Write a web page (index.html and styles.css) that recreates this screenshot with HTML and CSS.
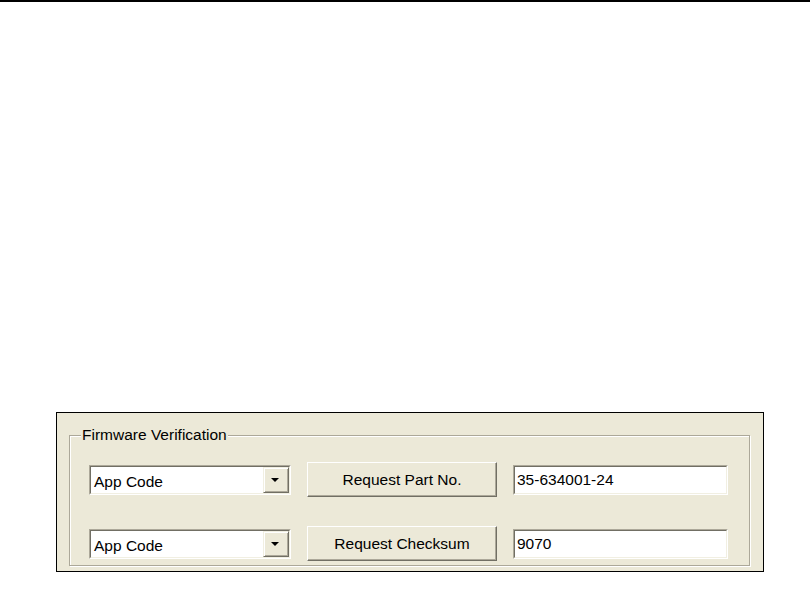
FILE: index.html
```html
<!DOCTYPE html>
<html>
<head>
<meta charset="utf-8">
<link rel="stylesheet" href="styles.css">
</head>
<body>
<div class="topline"></div>
<div class="panel">
  <fieldset class="group">
    <legend class="group-title">Firmware Verification</legend>
    <div class="row">
      <div class="combo">
        <div class="combo-inner">
          <span class="combo-text">App Code</span>
          <span class="combo-btn"><span class="arrow"></span></span>
        </div>
      </div>
      <button class="btn">Request Part No.</button>
      <div class="edit"><div class="edit-inner">35-634001-24</div></div>
    </div>
    <div class="row">
      <div class="combo">
        <div class="combo-inner">
          <span class="combo-text">App Code</span>
          <span class="combo-btn"><span class="arrow"></span></span>
        </div>
      </div>
      <button class="btn">Request Checksum</button>
      <div class="edit"><div class="edit-inner">9070</div></div>
    </div>
  </fieldset>
</div>
</body>
</html>
```

FILE: styles.css
```css
html, body {
  margin: 0;
  padding: 0;
  background: #ffffff;
}
body {
  font-family: "Liberation Sans", Arial, sans-serif;
  font-size: 15.5px;
  color: #000;
}
.topline {
  height: 2px;
  background: #000;
}
.panel {
  margin: 410px 0 0 56px;
  width: 708px;
  box-sizing: border-box;
  background: #ECE9D8;
  border: 1px solid #000;
  padding: 13px 13px 5px 12px;
}
.group {
  margin: 0;
  padding: 18px 0 4px 0;
  border: 1px solid #ACA899;
  box-shadow: inset 1px 1px 0 #fff, 1px 1px 0 #fff;
  display: flex;
  flex-direction: column;
  gap: 29px;
}
.group-title {
  margin-left: 11px;
  padding: 0 1px;
  line-height: 18px;
  background: #ECE9D8;
}
.row {
  display: flex;
  align-items: center;
  padding-left: 19px;
}
.combo {
  width: 202px;
  height: 30px;
  box-sizing: border-box;
  border-top: 1px solid #ACA899;
  border-left: 1px solid #ACA899;
  border-right: 1px solid #fff;
  border-bottom: 1px solid #fff;
}
.combo-inner {
  height: 100%;
  box-sizing: border-box;
  border-top: 1px solid #716F64;
  border-left: 1px solid #716F64;
  border-right: 1px solid #F1EFE2;
  border-bottom: 1px solid #F1EFE2;
  background: #fff;
  display: flex;
  align-items: center;
}
.combo-text {
  flex: 1;
  padding: 5px 0 0 3px;
  line-height: 18px;
}
.combo-btn {
  width: 26px;
  height: 26px;
  box-sizing: border-box;
  background: #ECE9D8;
  border-top: 1px solid #F1EFE2;
  border-left: 1px solid #F1EFE2;
  border-right: 1px solid #716F64;
  border-bottom: 1px solid #716F64;
  box-shadow: inset 1px 1px 0 #fff, inset -1px -1px 0 #ACA899;
  display: flex;
  align-items: center;
  justify-content: center;
}
.arrow {
  width: 0;
  height: 0;
  border-left: 4px solid transparent;
  border-right: 4px solid transparent;
  border-top: 4px solid #000;
  margin-left: -2px;
  margin-top: 1px;
}
.btn {
  margin-left: 16px;
  width: 190px;
  height: 35px;
  box-sizing: border-box;
  font-family: inherit;
  font-size: 15.5px;
  color: #000;
  background: #ECE9D8;
  border-top: 1px solid #fff;
  border-left: 1px solid #fff;
  border-right: 1px solid #716F64;
  border-bottom: 1px solid #716F64;
  box-shadow: inset -1px -1px 0 #ACA899;
  padding: 0;
}
.edit {
  margin-left: 16px;
  width: 215px;
  height: 30px;
  box-sizing: border-box;
  border-top: 1px solid #ACA899;
  border-left: 1px solid #ACA899;
  border-right: 1px solid #fff;
  border-bottom: 1px solid #fff;
}
.edit-inner {
  height: 100%;
  box-sizing: border-box;
  border-top: 1px solid #716F64;
  border-left: 1px solid #716F64;
  border-right: 1px solid #F1EFE2;
  border-bottom: 1px solid #F1EFE2;
  background: #fff;
  padding: 4px 0 0 2px;
  line-height: 18px;
}
```
